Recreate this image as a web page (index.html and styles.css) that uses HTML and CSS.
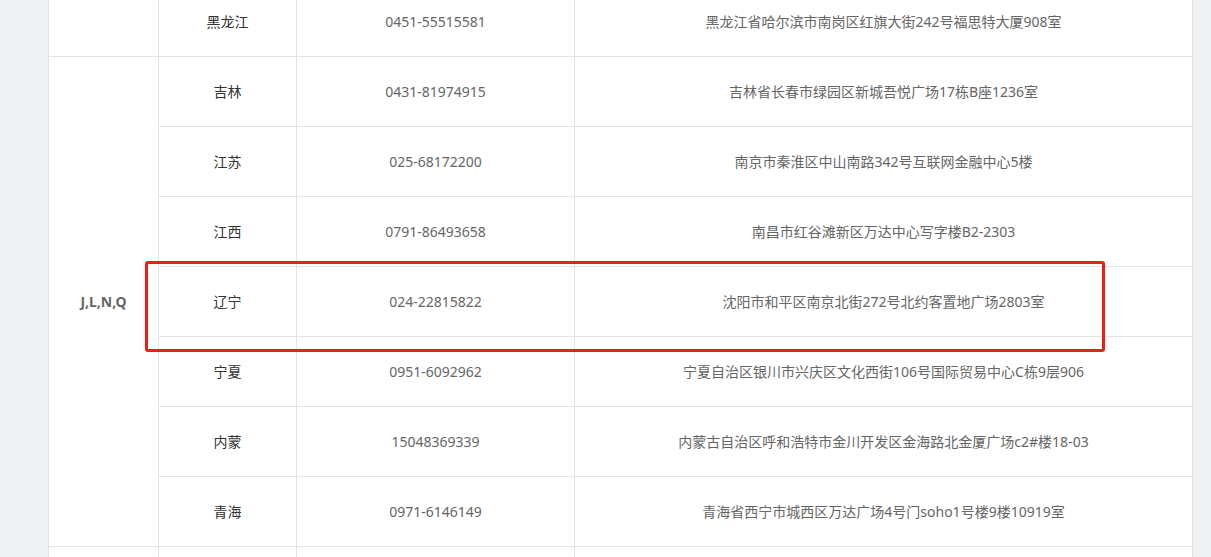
FILE: index.html
```html
<!DOCTYPE html>
<html lang="zh-CN">
<head>
    <meta charset="UTF-8">
    <meta name="viewport" content="width=device-width, initial-scale=1.0">
    <title>分公司联系方式</title>
    <link rel="stylesheet" href="styles.css">
</head>
<body>
    <div class="page">
        <table class="contact">
            <colgroup>
                <col class="col-group">
                <col class="col-prov">
                <col class="col-tel">
                <col class="col-addr">
            </colgroup>
            <tr>
                <td></td>
                <td class="prov">黑龙江</td>
                <td>0451-55515581</td>
                <td>黑龙江省哈尔滨市南岗区红旗大街242号福思特大厦908室</td>
            </tr>
            <tr>
                <td class="group" rowspan="7">J,L,N,Q</td>
                <td class="prov">吉林</td>
                <td>0431-81974915</td>
                <td>吉林省长春市绿园区新城吾悦广场17栋B座1236室</td>
            </tr>
            <tr>
                <td class="prov">江苏</td>
                <td>025-68172200</td>
                <td>南京市秦淮区中山南路342号互联网金融中心5楼</td>
            </tr>
            <tr>
                <td class="prov">江西</td>
                <td>0791-86493658</td>
                <td>南昌市红谷滩新区万达中心写字楼B2-2303</td>
            </tr>
            <tr>
                <td class="prov">辽宁</td>
                <td>024-22815822</td>
                <td>沈阳市和平区南京北街272号北约客置地广场2803室</td>
            </tr>
            <tr>
                <td class="prov">宁夏</td>
                <td>0951-6092962</td>
                <td>宁夏自治区银川市兴庆区文化西街106号国际贸易中心C栋9层906</td>
            </tr>
            <tr>
                <td class="prov">内蒙</td>
                <td>15048369339</td>
                <td>内蒙古自治区呼和浩特市金川开发区金海路北金厦广场c2#楼18-03</td>
            </tr>
            <tr>
                <td class="prov">青海</td>
                <td>0971-6146149</td>
                <td>青海省西宁市城西区万达广场4号门soho1号楼9楼10919室</td>
            </tr>
            <tr>
                <td></td>
                <td></td>
                <td></td>
                <td></td>
            </tr>
        </table>

        <!-- 标记框 -->
        <div class="mark"></div>
    </div>
</body>
</html>
```

FILE: styles.css
```css
*{
    padding: 0;
    margin: 0;
    box-sizing: border-box;
}

body{
    background: #f0f1f3;
    font-family: "Noto Sans", "Noto Sans CJK SC", sans-serif;
    font-size: 14px;
    color: #666;
    overflow: hidden;
}

.page{
    position: relative;
    width: 1144px;
    margin: -14px 0 0 48px;
    background: #fff;
}

.contact{
    width: 1144px;
    border-collapse: collapse;
    table-layout: fixed;
    background: #fff;
}

.col-group{ width: 110px; }
.col-prov{ width: 138px; }
.col-tel{ width: 278px; }
.col-addr{ width: 618px; }

.contact td{
    height: 70px;
    border: 1px solid #e3e3e3;
    text-align: center;
    vertical-align: middle;
    line-height: 20px;
}

.contact .prov{
    color: #333;
}

.contact .group{
    font-weight: bold;
    color: #666;
}

.mark{
    position: absolute;
    left: 97px;
    top: 275px;
    width: 960px;
    height: 91px;
    border: 3px solid #f31c12;
    border-radius: 3px;
}
```
